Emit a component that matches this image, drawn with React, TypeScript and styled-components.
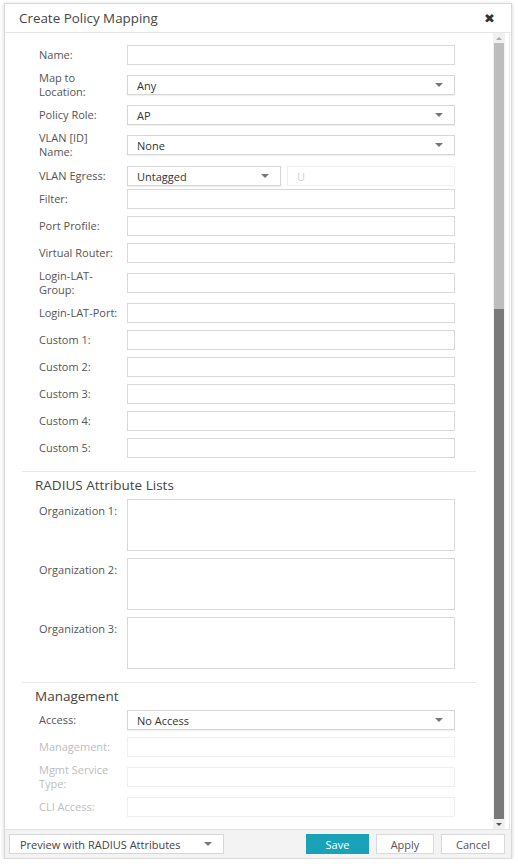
import React from "react";
import styled, { createGlobalStyle } from "styled-components";

const Global = createGlobalStyle`
  html, body { margin: 0; padding: 0; background: #ffffff; }
  body { font-family: "Open Sans", "Liberation Sans", sans-serif; }
  * { box-sizing: border-box; }
`;

const Dialog = styled.div`
  margin: 3px 0 0 4px;
  width: 508px;
  height: 856px;
  border: 1px solid #d9d9d9;
  box-shadow: 0 1px 4px rgba(0, 0, 0, 0.18);
  background: #fff;
  display: flex;
  flex-direction: column;
`;

const Header = styled.div`
  height: 29px;
  flex: none;
  border-bottom: 1px solid #e6e6e6;
  display: flex;
  align-items: center;
  justify-content: space-between;
  padding: 0 14px 0 14px;
`;

const Title = styled.div`
  font-size: 13.4px;
  color: #454545;
`;

const Close = styled.div`
  font-family: "DejaVu Sans", sans-serif;
  font-size: 13px;
  font-weight: bold;
  color: #333;
  margin-right: 2px;
`;

const Body = styled.div`
  flex: 1;
  display: flex;
  min-height: 0;
  border-bottom: 1px solid #e3e3e3;
`;

const Content = styled.div`
  width: 488px;
  flex: none;
  overflow: hidden;
  padding-top: 12px;
`;

const Scroll = styled.div`
  width: 12px;
  flex: none;
  display: flex;
  flex-direction: column;
  background: #f0f0f0;
`;

const ScrollArrow = styled.div<{ $down?: boolean }>`
  height: 10px;
  flex: none;
  display: flex;
  align-items: center;
  justify-content: center;
  &::after {
    content: "";
    border-left: 3px solid transparent;
    border-right: 3px solid transparent;
    ${(p) => (p.$down ? "border-top: 3px solid #555;" : "border-bottom: 3px solid #aaa;")}
  }
`;

const ScrollPart = styled.div<{ $h?: number; $c: string }>`
  ${(p) => (p.$h ? `height: ${p.$h}px; flex: none;` : "flex: 1;")}
  background: ${(p) => p.$c};
  margin: 0 1px;
`;

const Gutter = styled.div`
  flex: 1;
  border-right: 1px solid #e8e8e8;
  margin-right: 1px;
`;

const Row = styled.div<{ $mb?: number; $top?: boolean }>`
  display: flex;
  align-items: ${(p) => (p.$top ? "flex-start" : "center")};
  padding-left: 34px;
  min-height: 20px;
  margin-bottom: ${(p) => (p.$mb ?? 7)}px;
`;

const Label = styled.div<{ $disabled?: boolean; $pt?: number }>`
  width: 88px;
  flex: none;
  font-size: 11px;
  line-height: 14px;
  color: ${(p) => (p.$disabled ? "#bdbdbd" : "#555")};
  padding-right: 4px;
  padding-top: ${(p) => p.$pt ?? 0}px;
  white-space: nowrap;
`;

const Input = styled.div<{ $disabled?: boolean; $w?: number; $h?: number }>`
  width: ${(p) => p.$w ?? 328}px;
  height: ${(p) => p.$h ?? 20}px;
  flex: none;
  border: 1px solid ${(p) => (p.$disabled ? "#efefef" : "#d9d9d9")};
  background: #fff;
  display: flex;
  align-items: center;
  padding: 0 9px;
  font-size: 11px;
  color: #ccc;
`;

const Select = styled.div<{ $w?: number }>`
  width: ${(p) => p.$w ?? 328}px;
  height: 20px;
  flex: none;
  border: 1px solid #d6d6d6;
  box-shadow: 0 1px 1px rgba(0, 0, 0, 0.06);
  background: #fff;
  display: flex;
  align-items: center;
  justify-content: space-between;
  padding: 0 11px 0 9px;
  font-size: 11px;
  color: #333;
`;

const Caret = styled.span`
  width: 0;
  height: 0;
  border-left: 4px solid transparent;
  border-right: 4px solid transparent;
  border-top: 4px solid #777;
`;

const Pair = styled.div`
  display: flex;
  gap: 6px;
`;

const Divider = styled.div<{ $mt: number }>`
  margin: ${(p) => p.$mt}px 0 0 17px;
  width: 454px;
  border-top: 1px solid #e8e8e8;
`;

const Heading = styled.div`
  font-size: 13.5px;
  color: #444;
  padding-left: 30px;
  margin: 5px 0 5px;
  line-height: 17px;
`;

const Footer = styled.div`
  height: 28px;
  flex: none;
  background: #f3f3f3;
  display: flex;
  align-items: center;
  padding: 0 6px 0 4px;
`;

const PreviewSelect = styled.div`
  width: 215px;
  height: 20px;
  border: 1px solid #d6d6d6;
  background: #fff;
  display: flex;
  align-items: center;
  justify-content: space-between;
  padding: 0 11px 0 10px;
  font-size: 11px;
  color: #444;
`;

const Spacer = styled.div`
  flex: 1;
`;

const Button = styled.div<{ $primary?: boolean; $w: number }>`
  width: ${(p) => p.$w}px;
  height: 20px;
  margin-left: 7px;
  display: flex;
  align-items: center;
  justify-content: center;
  font-size: 11px;
  border: 1px solid ${(p) => (p.$primary ? "#1aa3b8" : "#d9d9d9")};
  background: ${(p) => (p.$primary ? "#1aa3b8" : "#fff")};
  color: ${(p) => (p.$primary ? "#fff" : "#555")};
`;

const TextField = ({ label, disabled, mb }: { label: React.ReactNode; disabled?: boolean; mb?: number }) => (
  <Row $mb={mb}>
    <Label $disabled={disabled}>{label}</Label>
    <Input $disabled={disabled} />
  </Row>
);

const SelectField = ({ label, value, mb }: { label: React.ReactNode; value: string; mb?: number }) => (
  <Row $mb={mb}>
    <Label>{label}</Label>
    <Select>
      {value}
      <Caret />
    </Select>
  </Row>
);

const AreaField = ({ label, mb }: { label: string; mb?: number }) => (
  <Row $top $mb={mb}>
    <Label $pt={5}>{label}</Label>
    <Input $h={52} />
  </Row>
);

export default function App() {
  return (
    <>
      <Global />
      <Dialog>
        <Header>
          <Title>Create Policy Mapping</Title>
          <Close>✖</Close>
        </Header>
        <Body>
          <Content>
            <TextField label="Name:" mb={6} />
            <SelectField label={<>Map to<br />Location:</>} value="Any" mb={6} />
            <SelectField label="Policy Role:" value="AP" mb={6} />
            <SelectField label={<>VLAN [ID]<br />Name:</>} value="None" mb={7} />
            <Row $mb={3}>
              <Label>VLAN Egress:</Label>
              <Pair>
                <Select $w={154}>
                  Untagged
                  <Caret />
                </Select>
                <Input $disabled $w={168}>U</Input>
              </Pair>
            </Row>
            <TextField label="Filter:" />
            <TextField label="Port Profile:" />
            <TextField label="Virtual Router:" mb={6} />
            <TextField label={<>Login-LAT-<br />Group:</>} mb={6} />
            <TextField label="Login-LAT-Port:" />
            <TextField label="Custom 1:" />
            <TextField label="Custom 2:" />
            <TextField label="Custom 3:" />
            <TextField label="Custom 4:" />
            <TextField label="Custom 5:" mb={0} />
            <Divider $mt={13} />
            <Heading>RADIUS Attribute Lists</Heading>
            <AreaField label="Organization 1:" />
            <AreaField label="Organization 2:" />
            <AreaField label="Organization 3:" mb={0} />
            <Divider $mt={13} />
            <Heading>Management</Heading>
            <SelectField label="Access:" value="No Access" />
            <TextField label="Management:" disabled mb={6} />
            <TextField label={<>Mgmt Service<br />Type:</>} disabled mb={6} />
            <TextField label="CLI Access:" disabled />
          </Content>
          <Scroll>
            <ScrollArrow />
            <ScrollPart $h={266} $c="#bdbdbd" />
            <ScrollPart $c="#7a7a7a" />
            <ScrollArrow $down />
          </Scroll>
          <Gutter />
        </Body>
        <Footer>
          <PreviewSelect>
            Preview with RADIUS Attributes
            <Caret />
          </PreviewSelect>
          <Spacer />
          <Button $primary $w={63}>Save</Button>
          <Button $w={58}>Apply</Button>
          <Button $w={64}>Cancel</Button>
        </Footer>
      </Dialog>
    </>
  );
}
